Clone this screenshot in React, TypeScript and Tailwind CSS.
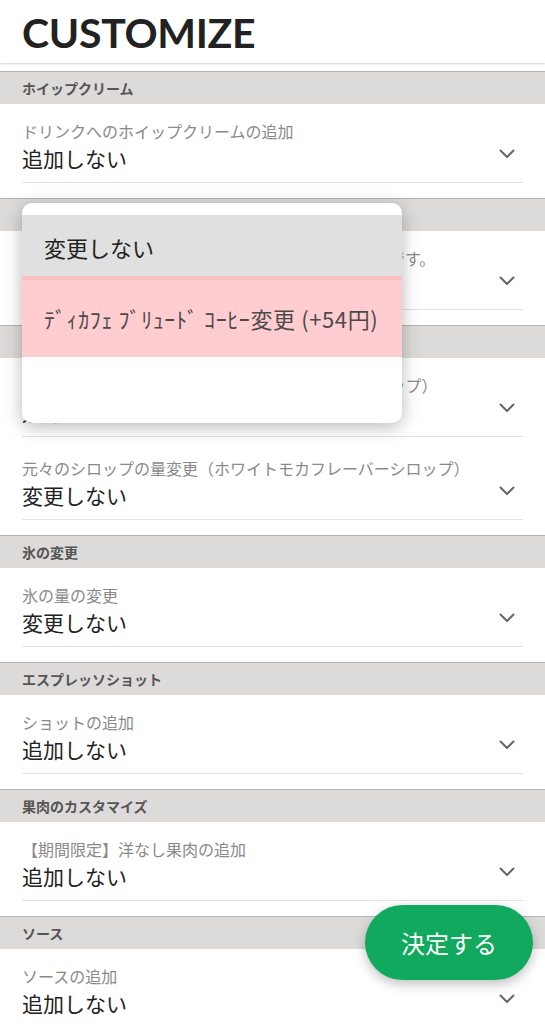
const sections = [
  {
    title: "ホイップクリーム",
    items: [{ label: "ドリンクへのホイップクリームの追加", value: "追加しない" }],
  },
  {
    title: "コーヒー",
    items: [{ label: "ドリンクのエスプレッソをディカフェに変更が可能です。", value: "変更しない" }],
  },
  {
    title: "シロップ",
    items: [
      { label: "シロップの量の追加（ホワイトモカフレーバーシロップ）", value: "追加しない" },
      { label: "元々のシロップの量変更（ホワイトモカフレーバーシロップ）", value: "変更しない" },
    ],
  },
  { title: "氷の変更", items: [{ label: "氷の量の変更", value: "変更しない" }] },
  { title: "エスプレッソショット", items: [{ label: "ショットの追加", value: "追加しない" }] },
  {
    title: "果肉のカスタマイズ",
    items: [{ label: "【期間限定】洋なし果肉の追加", value: "追加しない" }],
  },
  { title: "ソース", items: [{ label: "ソースの追加", value: "追加しない" }] },
];

const Chevron = () => (
  <svg width="16" height="10" viewBox="0 0 16 10" fill="none" className="shrink-0">
    <polyline points="1.5,1.5 8,8 14.5,1.5" stroke="#666" strokeWidth="2" strokeLinecap="round" strokeLinejoin="round" />
  </svg>
);

export default function App() {
  return (
    <div className="relative h-[1024px] overflow-hidden bg-white font-['Noto_Sans_CJK_JP',sans-serif]">
      <header className="h-[63px] px-[22px] pt-[11px] shadow-[0_1px_2px_rgba(0,0,0,0.18)]">
        <h1 className="font-['Lato',sans-serif] text-[41px] font-bold leading-[44px] tracking-[-0.3px] text-[#222]">
          CUSTOMIZE
        </h1>
      </header>

      <div className="mt-[8px]">
        {sections.map((s) => (
          <section key={s.title}>
            <div className="flex h-[33px] items-center border-t border-[#b4b4b4] bg-[#dddbd9] px-[22px] text-[14px] font-bold text-[#555]">
              {s.title}
            </div>
            <div className="px-[22px] pb-[15px]">
              {s.items.map((it, i) => (
                <div
                  key={it.label}
                  className={`flex items-center border-b border-[#e2e2e2] pb-[10px] ${i > 0 ? "pt-[21px]" : "pt-[17px]"}`}
                >
                  <div className="min-w-0 flex-1">
                    <div className="whitespace-nowrap text-[16px] leading-5 text-[#8a8a8a]">{it.label}</div>
                    <div className="mt-[3px] text-[21px] leading-7 text-[#222]">{it.value}</div>
                  </div>
                  <div className="mr-[8px] mt-[14px]">
                    <Chevron />
                  </div>
                </div>
              ))}
            </div>
          </section>
        ))}
      </div>

      {/* option menu */}
      <div className="absolute left-[22px] top-[203px] h-[220px] w-[380px] overflow-hidden rounded-[10px] bg-white shadow-[0_4px_18px_rgba(0,0,0,0.28)]">
        <div className="mt-[12px] flex h-[61px] items-center bg-[#e0e0e0] px-[22px] pt-[4px] text-[22px] text-[#222]">
          変更しない
        </div>
        <div className="flex h-[81px] items-center border-t-4 border-[#f7c1c4] bg-[#ffcdd0] px-[22px] text-[22px] tracking-[0.6px] text-[#4a4a4a]">
          ﾃﾞｨｶﾌｪ ﾌﾞﾘｭｰﾄﾞ ｺｰﾋｰ変更 (+54円)
        </div>
      </div>

      <button className="absolute left-[365px] top-[905px] flex h-[75px] w-[168px] items-center justify-center rounded-full bg-[#10a95e] text-[24px] text-white shadow-[0_4px_12px_rgba(0,0,0,0.25)]">
        決定する
      </button>
    </div>
  );
}
